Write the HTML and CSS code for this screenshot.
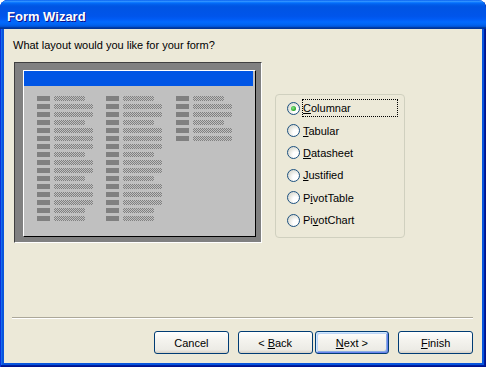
FILE: index.html
```html
<!DOCTYPE html>
<html lang="en">
<head>
    <meta charset="UTF-8">
    <meta name="viewport" content="width=device-width, initial-scale=1.0">
    <title>Form Wizard</title>
    <link rel="stylesheet" href="styles.css">
</head>
<body>
    <div class="window">
        <div class="titlebar">Form Wizard</div>
        <div class="client">
            <p class="prompt">What layout would you like for your form?</p>

            <div class="main">
                <!-- preview of the selected layout -->
                <div class="preview">
                    <div class="sheet">
                        <div class="sheet-head"></div>
                        <div class="sheet-cols">
                            <div class="col">
                                <div class="row"><i class="lbl"></i><i class="txt"></i></div>
                                <div class="row"><i class="lbl"></i><i class="txt long"></i></div>
                                <div class="row"><i class="lbl"></i><i class="txt long"></i></div>
                                <div class="row"><i class="lbl"></i><i class="txt"></i></div>
                                <div class="row"><i class="lbl"></i><i class="txt long"></i></div>
                                <div class="row"><i class="lbl"></i><i class="txt long"></i></div>
                                <div class="row"><i class="lbl"></i><i class="txt long"></i></div>
                                <div class="row"><i class="lbl"></i><i class="txt"></i></div>
                                <div class="row"><i class="lbl"></i><i class="txt long"></i></div>
                                <div class="row"><i class="lbl"></i><i class="txt long"></i></div>
                                <div class="row"><i class="lbl"></i><i class="txt"></i></div>
                                <div class="row"><i class="lbl"></i><i class="txt long"></i></div>
                                <div class="row"><i class="lbl"></i><i class="txt long"></i></div>
                                <div class="row"><i class="lbl"></i><i class="txt long"></i></div>
                                <div class="row"><i class="lbl"></i><i class="txt"></i></div>
                                <div class="row"><i class="lbl"></i><i class="txt"></i></div>
                            </div>
                            <div class="col">
                                <div class="row"><i class="lbl"></i><i class="txt"></i></div>
                                <div class="row"><i class="lbl"></i><i class="txt long"></i></div>
                                <div class="row"><i class="lbl"></i><i class="txt long"></i></div>
                                <div class="row"><i class="lbl"></i><i class="txt"></i></div>
                                <div class="row"><i class="lbl"></i><i class="txt long"></i></div>
                                <div class="row"><i class="lbl"></i><i class="txt long"></i></div>
                                <div class="row"><i class="lbl"></i><i class="txt long"></i></div>
                                <div class="row"><i class="lbl"></i><i class="txt"></i></div>
                                <div class="row"><i class="lbl"></i><i class="txt long"></i></div>
                                <div class="row"><i class="lbl"></i><i class="txt long"></i></div>
                                <div class="row"><i class="lbl"></i><i class="txt"></i></div>
                                <div class="row"><i class="lbl"></i><i class="txt long"></i></div>
                                <div class="row"><i class="lbl"></i><i class="txt long"></i></div>
                                <div class="row"><i class="lbl"></i><i class="txt long"></i></div>
                                <div class="row"><i class="lbl"></i><i class="txt"></i></div>
                                <div class="row"><i class="lbl"></i><i class="txt"></i></div>
                            </div>
                            <div class="col">
                                <div class="row"><i class="lbl"></i><i class="txt"></i></div>
                                <div class="row"><i class="lbl"></i><i class="txt long"></i></div>
                                <div class="row"><i class="lbl"></i><i class="txt long"></i></div>
                                <div class="row"><i class="lbl"></i><i class="txt"></i></div>
                                <div class="row"><i class="lbl"></i><i class="txt long"></i></div>
                                <div class="row"><i class="lbl"></i><i class="txt long"></i></div>
                            </div>
                        </div>
                    </div>
                </div>

                <!-- layout choices -->
                <div class="group">
                    <label class="option"><input type="radio" name="layout" checked><span class="caption focus"><u>C</u>olumnar</span></label>
                    <label class="option"><input type="radio" name="layout"><span class="caption"><u>T</u>abular</span></label>
                    <label class="option"><input type="radio" name="layout"><span class="caption"><u>D</u>atasheet</span></label>
                    <label class="option"><input type="radio" name="layout"><span class="caption"><u>J</u>ustified</span></label>
                    <label class="option"><input type="radio" name="layout"><span class="caption">P<u>i</u>votTable</span></label>
                    <label class="option"><input type="radio" name="layout"><span class="caption">Pi<u>v</u>otChart</span></label>
                </div>
            </div>

            <div class="footer">
                <div class="separator"></div>
                <div class="buttons">
                    <button type="button" class="btn">Cancel</button>
                    <button type="button" class="btn btn-back">&lt; <u>B</u>ack</button>
                    <button type="button" class="btn btn-default"><u>N</u>ext &gt;</button>
                    <button type="button" class="btn"><u>F</u>inish</button>
                </div>
            </div>
        </div>
    </div>
</body>
</html>
```

FILE: styles.css
```css
body {
    margin: 0;
    font-family: Tahoma, "Liberation Sans", sans-serif;
    font-size: 11px;
    color: #000;
}

.window {
    width: 486px;
    height: 367px;
    display: flex;
    flex-direction: column;
    background: #0855dd;
    border-radius: 8px 8px 0 0;
    box-shadow: inset 1px 0 #0831d9, inset -1px -1px #00138c, inset -2px -2px #001ea0, inset 2px 0 #166aee;
}

.titlebar {
    height: 29px;
    box-sizing: border-box;
    padding: 4px 0 0 7px;
    line-height: 25px;
    border-radius: 8px 8px 0 0;
    color: #fff;
    font-family: "Trebuchet MS", "Liberation Sans", sans-serif;
    font-size: 13px;
    font-weight: bold;
    text-shadow: 1px 1px #0f1089;
    background: linear-gradient(to bottom, #0058ee 0%, #3593ff 4%, #288eff 6%, #127dff 8%, #036ffc 10%, #0262ee 14%, #0057e5 20%, #0054e3 24%, #0055eb 56%, #005bf5 66%, #026afe 76%, #0062ef 86%, #0052d6 92%, #0040ab 94%, #003092 100%);
}

.client {
    flex: 1;
    margin: 0 4px 4px;
    display: flex;
    flex-direction: column;
    background: #ece9d8;
}

.prompt {
    margin: 10px 0 0 9px;
    line-height: 13px;
}

.main {
    display: flex;
    align-items: flex-start;
    margin-top: 10px;
    padding-left: 10px;
}

/* layout preview */
.preview {
    width: 248px;
    height: 181px;
    box-sizing: border-box;
    padding: 7px 5px 5px 8px;
    border: 1px solid;
    border-color: #404040 #fff #fff #404040;
    background: #808080;
}

.sheet {
    height: 100%;
    box-sizing: border-box;
    border: 1px solid;
    border-color: #fff #000 #000 #fff;
    background: #c0c0c0;
}

.sheet-head {
    height: 15px;
    margin-right: 2px;
    background: #0055e5;
}

.sheet-cols {
    display: flex;
    padding: 10px 0 0 13px;
}

.col {
    width: 69px;
    display: flex;
    flex-direction: column;
    gap: 3px;
}

.col:nth-child(2) {
    width: 70px;
}

.row {
    display: flex;
    gap: 4px;
    height: 5px;
}

.lbl {
    width: 13px;
    background: #808080;
}

.txt {
    width: 31px;
    background: repeating-conic-gradient(#808080 0 25%, #c0c0c0 0 50%) 0 0 / 2px 2px;
}

.txt.long {
    width: 39px;
}

/* radio group */
.group {
    width: 130px;
    height: 144px;
    box-sizing: border-box;
    margin: 32px 0 0 13px;
    padding: 2px 0 0 11px;
    border: 1px solid #d0d0bf;
    border-radius: 4px;
}

.option {
    display: flex;
    align-items: center;
    height: 22.4px;
}

.option input {
    appearance: none;
    margin: 0;
    width: 13px;
    height: 13px;
    flex: none;
    box-sizing: border-box;
    border: 1px solid #1c5180;
    border-radius: 50%;
    background: radial-gradient(circle at 70% 70%, #fff 25%, #e6e6df 60%, #cfcfc6 100%);
    display: flex;
    align-items: center;
    justify-content: center;
}

.option input:checked::after {
    content: "";
    width: 5px;
    height: 5px;
    border-radius: 50%;
    background: radial-gradient(circle at 40% 40%, #8ae88a, #21a121 70%);
}

.caption {
    margin-left: 2px;
    width: 96px;
    height: 18px;
    box-sizing: border-box;
    border: 1px solid transparent;
    line-height: 16px;
}

.caption.focus {
    border: 1px dotted #000;
}

/* footer */
.footer {
    margin-top: auto;
}

.separator {
    margin: 0 9px 0 8px;
    border-top: 1px solid #aca899;
    border-bottom: 1px solid #fff;
}

.buttons {
    display: flex;
    margin: 12px 0 9px 150px;
}

.btn {
    width: 75px;
    height: 23px;
    margin-right: 9px;
    padding: 0;
    border: 1px solid #003c74;
    border-radius: 3px;
    font-family: Tahoma, "Liberation Sans", sans-serif;
    font-size: 11px;
    color: #000;
    background: linear-gradient(to bottom, #fff 0%, #f4f3ee 40%, #ecebe5 85%, #d6d0c5 100%);
}

.btn-back {
    margin-right: 2px;
}

.btn-default {
    box-shadow: inset 1px 1px #cee7ff, inset -1px -1px #6982ee, inset 2px 2px #bcd4f6, inset -2px -2px #89ade4;
}
```
